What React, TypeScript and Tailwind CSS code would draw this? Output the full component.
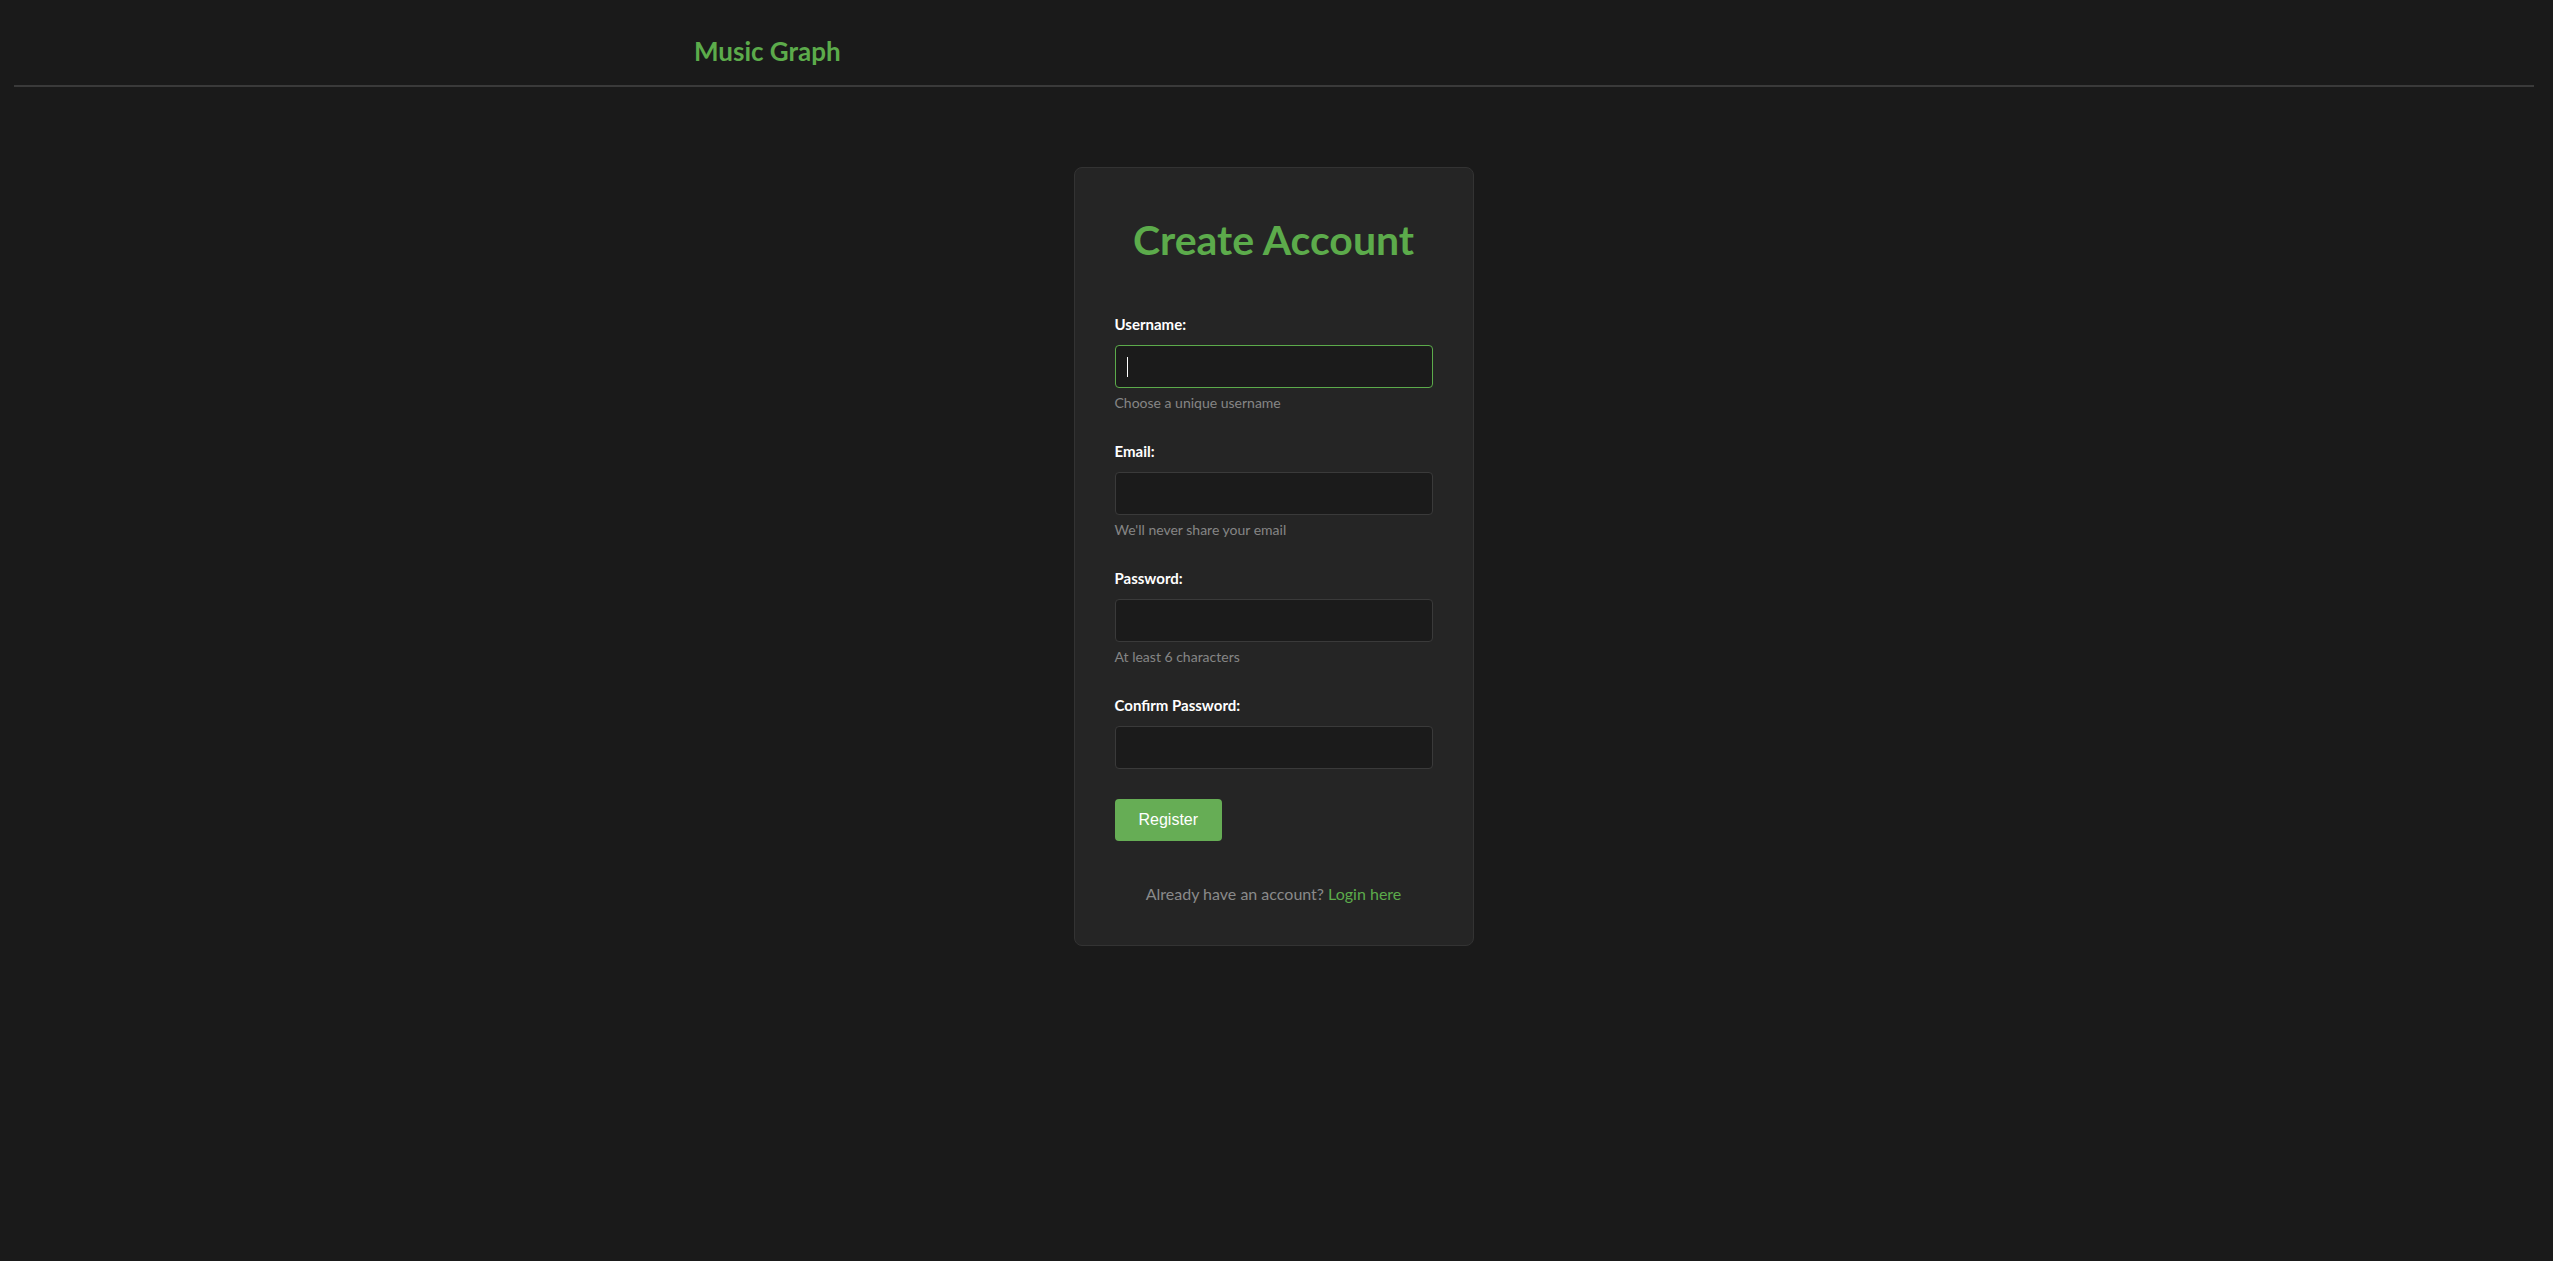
const fields = [
    { id: "username", label: "Username:", type: "text", hint: "Choose a unique username", focused: true },
    { id: "email", label: "Email:", type: "email", hint: "We'll never share your email" },
    { id: "password", label: "Password:", type: "password", hint: "At least 6 characters" },
    { id: "confirm", label: "Confirm Password:", type: "password" },
];

export default function App() {
    return (
        <div className="min-h-[1261px] bg-[#1a1a1a] font-['Lato',sans-serif] text-white">
            {/* Header */}
            <header className="ml-[14px] mr-[19px] border-b-2 border-[#3a3a3a]">
                <div className="mx-auto max-w-[1200px] px-5 pt-[36px] pb-[18px]">
                    <h1 className="text-[26px] leading-[1.2] font-bold text-[#5cab4b]">Music Graph</h1>
                </div>
            </header>

            {/* Register card */}
            <main className="flex justify-center pt-[80px] pr-[6px]">
                <div className="w-[400px] rounded-lg border border-[#333333] bg-[#252525] px-10 pt-[48px] pb-[42px]">
                    <h2 className="text-center text-[41px] leading-[1.17] font-bold text-[#5cab4b]">Create Account</h2>

                    <form className="mt-[51px]" onSubmit={(e) => e.preventDefault()}>
                        {fields.map((f, idx) => (
                            <div key={f.id} className={idx > 0 ? "mt-[30px]" : ""}>
                                <label htmlFor={f.id} className="mb-3 block text-[15px] leading-[1.2] font-bold text-white">
                                    {f.label}
                                </label>
                                <div className="relative">
                                    <input
                                        id={f.id}
                                        type={f.type}
                                        className={
                                            f.focused
                                                ? "block h-[43px] w-full rounded border border-[#5cab4b] bg-[#1b1b1b] px-[11px] text-white outline-none"
                                                : "block h-[43px] w-full rounded border border-[#3a3a3a] bg-[#1b1b1b] px-[11px] text-white outline-none"
                                        }
                                    />
                                    {f.focused && (
                                        <span className="pointer-events-none absolute top-[12px] left-[12px] h-[20px] w-px bg-white" />
                                    )}
                                </div>
                                {f.hint && (
                                    <p className="mt-[7px] text-[14px] leading-[1.2] text-[#858585]">{f.hint}</p>
                                )}
                            </div>
                        ))}

                        <button
                            type="submit"
                            className="mt-[30px] h-[42px] rounded bg-[#66ad55] px-6 font-['Liberation_Sans',Arial,sans-serif] text-[16px] text-white"
                        >
                            Register
                        </button>
                    </form>

                    <p className="mt-[43px] text-center text-[16px] leading-[1.2] text-[#8a8a8a]">
                        Already have an account? <a href="#" className="text-[#5cab4b]">Login here</a>
                    </p>
                </div>
            </main>
        </div>
    );
}
